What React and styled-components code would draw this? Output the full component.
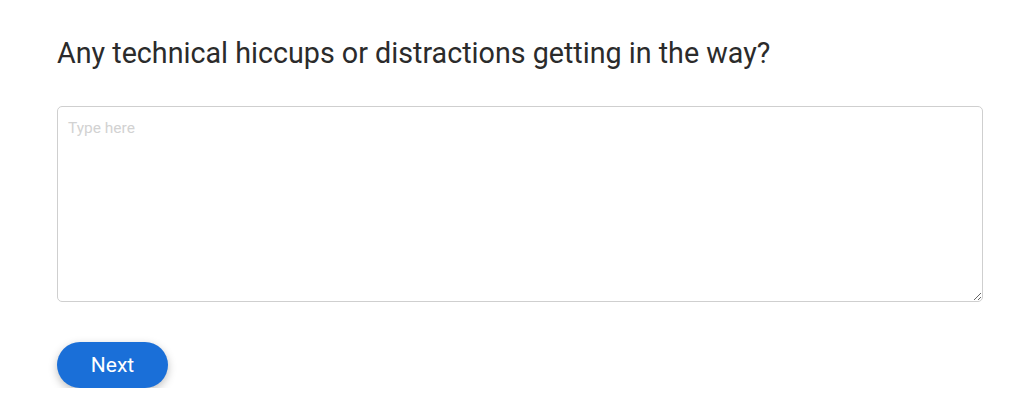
import styled, { createGlobalStyle } from 'styled-components'

const Global = createGlobalStyle`
  body {
    margin: 0;
    background: #fff;
    font-family: Roboto, "Liberation Sans", sans-serif;
  }
`

const Page = styled.div`
  padding: 35px 41px 0 57px;
  display: flex;
  flex-direction: column;
`

const Question = styled.h2`
  margin: 0;
  font-size: 28.7px;
  font-weight: 400;
  line-height: 36px;
  color: #2b2b2b;
`

const Answer = styled.textarea`
  margin-top: 35px;
  box-sizing: border-box;
  width: 926px;
  height: 196px;
  padding: 12px 10px;
  border: 1px solid #cfcfcf;
  border-radius: 5px;
  font-family: Roboto, "Liberation Sans", sans-serif;
  font-size: 15.5px;
  color: #333;
  outline: none;
  resize: vertical;

  &::placeholder {
    color: #d2d2d2;
  }
`

const NextButton = styled.button`
  margin-top: 40px;
  align-self: flex-start;
  width: 111px;
  height: 46px;
  border: none;
  border-radius: 23px;
  background: #1a6fd8;
  color: #fff;
  font-family: Roboto, "Liberation Sans", sans-serif;
  font-size: 21px;
  font-weight: 400;
  box-shadow: 0 3px 8px rgba(0, 0, 0, 0.25);
  cursor: pointer;
`

export default function App() {
  return (
    <>
      <Global />
      <Page>
        <Question>Any technical hiccups or distractions getting in the way?</Question>
        <Answer placeholder="Type here" />
        <NextButton>Next</NextButton>
      </Page>
    </>
  )
}
